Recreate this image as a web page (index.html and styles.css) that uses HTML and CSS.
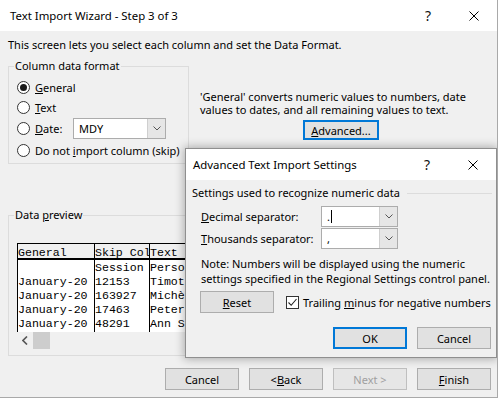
FILE: index.html
```html
<!DOCTYPE html>
<html>
<head>
<meta charset="utf-8">
<link rel="stylesheet" href="styles.css">
</head>
<body>
<div class="window">
  <div class="titlebar">
    <span class="title">Text Import Wizard - Step 3 of 3</span>
    <span class="tb-btn help">?</span>
    <span class="tb-btn close"><svg width="10" height="10" viewBox="0 0 10 10"><path d="M0.5 0.5 L9.5 9.5 M9.5 0.5 L0.5 9.5" stroke="#000" stroke-width="1"/></svg></span>
  </div>
  <div class="content">
    <p class="intro">This screen lets you select each column and set the Data Format.</p>
    <div class="top-row">
      <fieldset class="group format">
        <legend>Column data format</legend>
        <div class="radios">
          <label class="radio r1"><span class="circle checked"></span><span><u>G</u>eneral</span></label>
          <label class="radio r2"><span class="circle"></span><span><u>T</u>ext</span></label>
          <label class="radio r3"><span class="circle"></span><span class="date-lbl"><u>D</u>ate:</span>
            <span class="combo date-combo"><span class="val">MDY</span><span class="arrow"><svg width="8" height="5" viewBox="0 0 8 5"><path d="M0.5 0.5 L4 4 L7.5 0.5" fill="none" stroke="#555" stroke-width="1"/></svg></span></span>
          </label>
          <label class="radio r4"><span class="circle"></span><span>Do not <u>i</u>mport column (skip)</span></label>
        </div>
      </fieldset>
      <div class="info">
        <p>'General' converts numeric values to numbers, date<br>values to dates, and all remaining values to text.</p>
        <button class="btn focused adv"><u>A</u>dvanced...</button>
      </div>
    </div>
    <fieldset class="group preview">
      <legend>Data <u>p</u>review</legend>
      <div class="preview-inner">
        <div class="ptable">
          <div class="pcol c1">
            <div class="hd">General</div>
            <div class="cell"></div>
            <div class="cell">January-20</div>
            <div class="cell">January-20</div>
            <div class="cell">January-20</div>
            <div class="cell">January-20</div>
          </div>
          <div class="pcol c2">
            <div class="hd">Skip Col</div>
            <div class="cell">Session</div>
            <div class="cell">12153</div>
            <div class="cell">163927</div>
            <div class="cell">17463</div>
            <div class="cell">48291</div>
          </div>
          <div class="pcol c3">
            <div class="hd">Text</div>
            <div class="cell">Person</div>
            <div class="cell">Timothy</div>
            <div class="cell">Michèle</div>
            <div class="cell">Peter</div>
            <div class="cell">Ann S.</div>
          </div>
          <div class="pcol c4"></div>
        </div>
        <div class="hscroll">
          <span class="sarrow"><svg width="6" height="9" viewBox="0 0 6 9"><path d="M5 0.5 L1 4.5 L5 8.5" fill="none" stroke="#555" stroke-width="1.6"/></svg></span>
          <span class="thumb"></span>
        </div>
      </div>
    </fieldset>
    <div class="footer">
      <button class="btn">Cancel</button>
      <button class="btn">&lt; <u>B</u>ack</button>
      <button class="btn disabled">Next &gt;</button>
      <button class="btn"><u>F</u>inish</button>
    </div>
  </div>

  <div class="dialog">
    <div class="titlebar dlg-title">
      <span class="title">Advanced Text Import Settings</span>
      <span class="tb-btn help">?</span>
      <span class="tb-btn close"><svg width="10" height="10" viewBox="0 0 10 10"><path d="M0.5 0.5 L9.5 9.5 M9.5 0.5 L0.5 9.5" stroke="#000" stroke-width="1"/></svg></span>
    </div>
    <div class="dlg-body">
      <div class="section"><span>Settings used to recognize numeric data</span><span class="rule"></span></div>
      <div class="field f1">
        <span class="flabel"><u>D</u>ecimal separator:</span>
        <span class="combo sep-combo"><span class="val">.<span class="caret"></span></span><span class="arrow"><svg width="8" height="5" viewBox="0 0 8 5"><path d="M0.5 0.5 L4 4 L7.5 0.5" fill="none" stroke="#555" stroke-width="1"/></svg></span></span>
      </div>
      <div class="field f2">
        <span class="flabel"><u>T</u>housands separator:</span>
        <span class="combo sep-combo"><span class="val">,</span><span class="arrow"><svg width="8" height="5" viewBox="0 0 8 5"><path d="M0.5 0.5 L4 4 L7.5 0.5" fill="none" stroke="#555" stroke-width="1"/></svg></span></span>
      </div>
      <p class="note">Note: Numbers will be displayed using the numeric<br>settings specified in the Regional Settings control panel.</p>
      <div class="opt-row">
        <button class="btn"><u>R</u>eset</button>
        <label class="check"><span class="box"><svg width="11" height="11" viewBox="0 0 11 11"><path d="M1.5 5.5 L4.2 8.3 L9.5 2" fill="none" stroke="#222" stroke-width="1.1"/></svg></span><span>Trailing <u>m</u>inus for negative numbers</span></label>
      </div>
      <div class="dlg-buttons">
        <button class="btn focused">OK</button>
        <button class="btn">Cancel</button>
      </div>
    </div>
  </div>
</div>
</body>
</html>
```

FILE: styles.css
```css
* { box-sizing: border-box; }

body {
  margin: 0;
  background: #fff;
  font-family: "Noto Sans", "Open Sans", sans-serif;
  font-size: 11px;
  color: #000;
}

p { margin: 0; }

.window {
  position: relative;
  width: 498px;
  height: 398px;
  border-right: 1px solid #a9a9a9;
  border-bottom: 1px solid #a9a9a9;
  background: #f0f0f0;
  display: flex;
  flex-direction: column;
  overflow: hidden;
}

.titlebar {
  height: 31px;
  flex: none;
  background: #fff;
  display: flex;
  align-items: center;
  padding-left: 10px;
}

.title {
  flex: 1;
  font-size: 11.4px;
}

.tb-btn {
  width: 46px;
  height: 31px;
  display: flex;
  align-items: center;
  justify-content: center;
}

.tb-btn.help {
  font-size: 14px;
  color: #111;
}

.content {
  flex: 1;
  padding: 7px 6px 0 8px;
  display: flex;
  flex-direction: column;
}

.intro {
  line-height: 14px;
  height: 14px;
}

.top-row {
  display: flex;
  margin-top: 7px;
}

.group {
  margin: 0;
  padding: 0;
  border: 1px solid #dcdcdc;
  min-width: 0;
}

.group legend {
  margin-left: 5px;
  padding: 0 1px;
  line-height: 14px;
  height: 14px;
}

.format {
  width: 181px;
  height: 105px;
  flex: none;
}

.radios {
  padding: 4px 0 0 8px;
  display: flex;
  flex-direction: column;
}

.radio {
  display: flex;
  align-items: center;
  gap: 5px;
  white-space: nowrap;
}

.r1, .r2 { height: 20px; }
.r3, .r4 { height: 22px; }

.circle {
  width: 13px;
  height: 13px;
  flex: none;
  border: 1px solid #333;
  border-radius: 50%;
  background: #fff;
  display: flex;
  align-items: center;
  justify-content: center;
}

.circle.checked::after {
  content: "";
  width: 7px;
  height: 7px;
  border-radius: 50%;
  background: #1a1a1a;
}

.date-lbl {
  width: 33px;
}

.combo {
  display: flex;
  height: 21px;
  border: 1px solid #acacac;
  background: #fff;
}

.combo .val {
  flex: 1;
  display: flex;
  align-items: center;
  padding-left: 5px;
}

.combo .arrow {
  width: 18px;
  flex: none;
  background: #e6e6e6;
  border-left: 1px solid #cfcfcf;
  display: flex;
  align-items: center;
  justify-content: center;
}

.date-combo {
  width: 93px;
}

.info {
  padding: 31px 0 0 11px;
  display: flex;
  flex-direction: column;
}

.info p {
  line-height: 13px;
  white-space: nowrap;
}

.btn {
  font: inherit;
  color: #000;
  width: 74px;
  height: 22px;
  padding: 0;
  background: #e1e1e1;
  border: 1px solid #adadad;
  display: flex;
  align-items: center;
  justify-content: center;
}

.btn.focused {
  border: 2px solid #0078d7;
}

.btn.disabled {
  color: #a0a0a0;
  border-color: #bfbfbf;
  background: #e6e6e6;
}

.adv {
  margin: 4px 0 0 103px;
  width: 76px;
  height: 20px;
}

.preview {
  margin-top: 44px;
  height: 148px;
}

.preview-inner {
  padding: 21px 0 0 8px;
}

.ptable {
  display: flex;
  border-top: 1px solid #000;
  background: #fff;
  width: 470px;
  height: 89px;
  font-family: "Liberation Mono", monospace;
  font-size: 11.6px;
}

.pcol {
  border-left: 1px solid #000;
  overflow: hidden;
  flex: none;
}

.pcol .hd,
.pcol .cell {
  white-space: pre;
}

.pcol .hd {
  height: 16px;
  line-height: 17px;
  background: #f0f0f0;
  border-bottom: 2px solid #000;
  margin-bottom: 1px;
}

.pcol .cell {
  height: 14px;
  line-height: 14px;
}

.c1 { width: 77px; }
.c2 { width: 55px; }
.c3 { width: 60px; }
.c4 { flex: 1; border-left: none; }

.hscroll {
  display: flex;
  height: 17px;
  align-items: stretch;
}

.sarrow {
  width: 16px;
  display: flex;
  align-items: center;
  justify-content: center;
}

.thumb {
  width: 17px;
  background: #cdcdcd;
}

.footer {
  margin-top: 12px;
  display: flex;
  justify-content: flex-end;
  gap: 10px;
}

/* Dialog overlay */
.dialog {
  position: absolute;
  left: 185px;
  top: 148px;
  width: 312px;
  height: 210px;
  border: 1px solid #8f8f8f;
  background: #f0f0f0;
  box-shadow: 0 0 9px 1px rgba(0, 0, 0, 0.3);
  display: flex;
  flex-direction: column;
}

.dlg-title {
  padding-left: 7px;
}

.dlg-body {
  flex: 1;
  padding: 6px 4px 0 6px;
  display: flex;
  flex-direction: column;
}

.section {
  display: flex;
  align-items: center;
  line-height: 14px;
}

.section .rule {
  flex: 1;
  height: 1px;
  background: #dcdcdc;
  margin-left: 7px;
}

.field {
  display: flex;
  align-items: center;
  padding-left: 9px;
  height: 21px;
}

.f1 { margin-top: 6px; }
.f2 { margin-top: 1px; }

.flabel {
  width: 120px;
}

.sep-combo {
  width: 77px;
}

.caret {
  display: inline-block;
  width: 1px;
  height: 13px;
  background: #000;
  margin-left: 1px;
}

.note {
  margin-top: 7px;
  padding-left: 9px;
  line-height: 15px;
  white-space: nowrap;
}

.opt-row {
  display: flex;
  align-items: center;
  margin-top: 5px;
  padding-left: 8px;
}

.check {
  display: flex;
  align-items: center;
  gap: 4px;
  margin-left: 12px;
  white-space: nowrap;
}

.check .box {
  width: 13px;
  height: 13px;
  border: 1px solid #333;
  background: #fff;
  display: flex;
  align-items: center;
  justify-content: center;
}

.dlg-buttons {
  margin-top: 14px;
  display: flex;
  justify-content: flex-end;
  gap: 10px;
  padding-right: 1px;
}
```
